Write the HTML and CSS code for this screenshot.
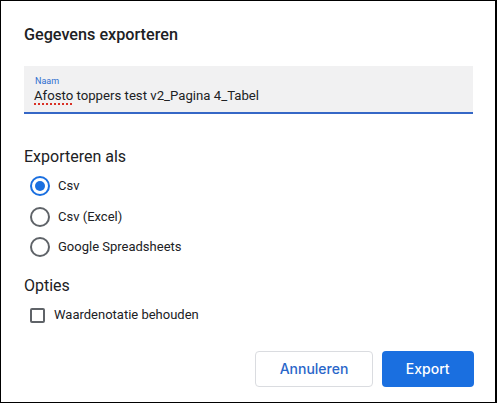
FILE: index.html
```html
<!DOCTYPE html>
<html lang="nl">
<head>
<meta charset="utf-8">
<title>Gegevens exporteren</title>
<link rel="stylesheet" href="styles.css">
</head>
<body>
<div class="dialog">
  <h1 class="title">Gegevens exporteren</h1>
  <div class="field">
    <div class="field-label">Naam</div>
    <div class="field-value"><span class="misspelled">Afosto</span> toppers test v2_Pagina 4_Tabel</div>
  </div>
  <h2 class="section">Exporteren als</h2>
  <div class="options">
    <div class="radio-row"><span class="radio checked"></span><span class="opt-label">Csv</span></div>
    <div class="radio-row"><span class="radio"></span><span class="opt-label">Csv (Excel)</span></div>
    <div class="radio-row"><span class="radio"></span><span class="opt-label">Google Spreadsheets</span></div>
  </div>
  <h2 class="section section-opties">Opties</h2>
  <div class="check-row"><span class="checkbox"></span><span class="opt-label">Waardenotatie behouden</span></div>
  <div class="footer">
    <button class="btn btn-secondary">Annuleren</button>
    <button class="btn btn-primary">Export</button>
  </div>
</div>
</body>
</html>
```

FILE: styles.css
```css
html, body {
  margin: 0;
  padding: 0;
  background: #000;
  height: 403px;
  overflow: hidden;
}
body {
  padding: 1px 2px 1px 1px;
  box-sizing: border-box;
}
.dialog {
  background: #fff;
  height: 401px;
  box-sizing: border-box;
  padding: 23.5px 22px 0 23px;
  font-family: Roboto, "Liberation Sans", sans-serif;
  color: #202124;
  display: flex;
  flex-direction: column;
}
.title {
  margin: 0;
  font-size: 16.2px;
  line-height: 20px;
  font-weight: 500;
  color: #202124;
}
.field {
  margin-top: 21.5px;
  background: #f1f1f2;
  border-bottom: 2px solid #3567c6;
  padding: 10px 10px 7px 11px;
  box-sizing: border-box;
  height: 48px;
}
.field-label {
  font-size: 9px;
  line-height: 11px;
  color: #2f6fd0;
}
.field-value {
  font-size: 13.2px;
  line-height: 18px;
  color: #202124;
  margin-left: -1px;
}
.misspelled {
  text-decoration: underline dotted #d93025;
  text-decoration-thickness: 1.5px;
  text-underline-offset: 3px;
}
.section {
  margin: 33px 0 0 0;
  font-size: 16px;
  line-height: 20px;
  font-weight: 400;
  color: #202124;
}
.options {
  margin-top: 3.5px;
  display: flex;
  flex-direction: column;
}
.radio-row {
  height: 30.7px;
  display: flex;
  align-items: center;
  padding-left: 6px;
}
.radio {
  width: 20px;
  height: 20px;
  box-sizing: border-box;
  border: 2px solid #5f6368;
  border-radius: 50%;
  display: flex;
  align-items: center;
  justify-content: center;
  margin-right: 8px;
  flex: none;
}
.radio.checked {
  border-color: #1a6fe0;
}
.radio.checked::after {
  content: "";
  width: 10px;
  height: 10px;
  border-radius: 50%;
  background: #1a6fe0;
}
.opt-label {
  font-size: 13px;
  line-height: 16px;
  color: #202124;
}
.section-opties {
  margin-top: 13px;
}
.check-row {
  margin-top: 4.5px;
  height: 30px;
  display: flex;
  align-items: center;
  padding-left: 6px;
}
.checkbox {
  width: 15px;
  height: 15px;
  box-sizing: border-box;
  border: 2px solid #5f6368;
  border-radius: 2px;
  margin-right: 9px;
  flex: none;
}
.footer {
  margin-top: 21px;
  display: flex;
  justify-content: flex-end;
  gap: 8.5px;
  margin-right: -1px;
}
.btn {
  height: 35.5px;
  border-radius: 4px;
  font-family: Inter, Roboto, sans-serif;
  font-size: 14px;
  font-weight: 500;
  cursor: pointer;
  padding: 0;
}
.btn-secondary {
  width: 118px;
  background: #fff;
  border: 1px solid #dadce0;
  color: #2a66c9;
}
.btn-primary {
  width: 92.5px;
  background: #1a6fe0;
  border: none;
  color: #fff;
}
```
